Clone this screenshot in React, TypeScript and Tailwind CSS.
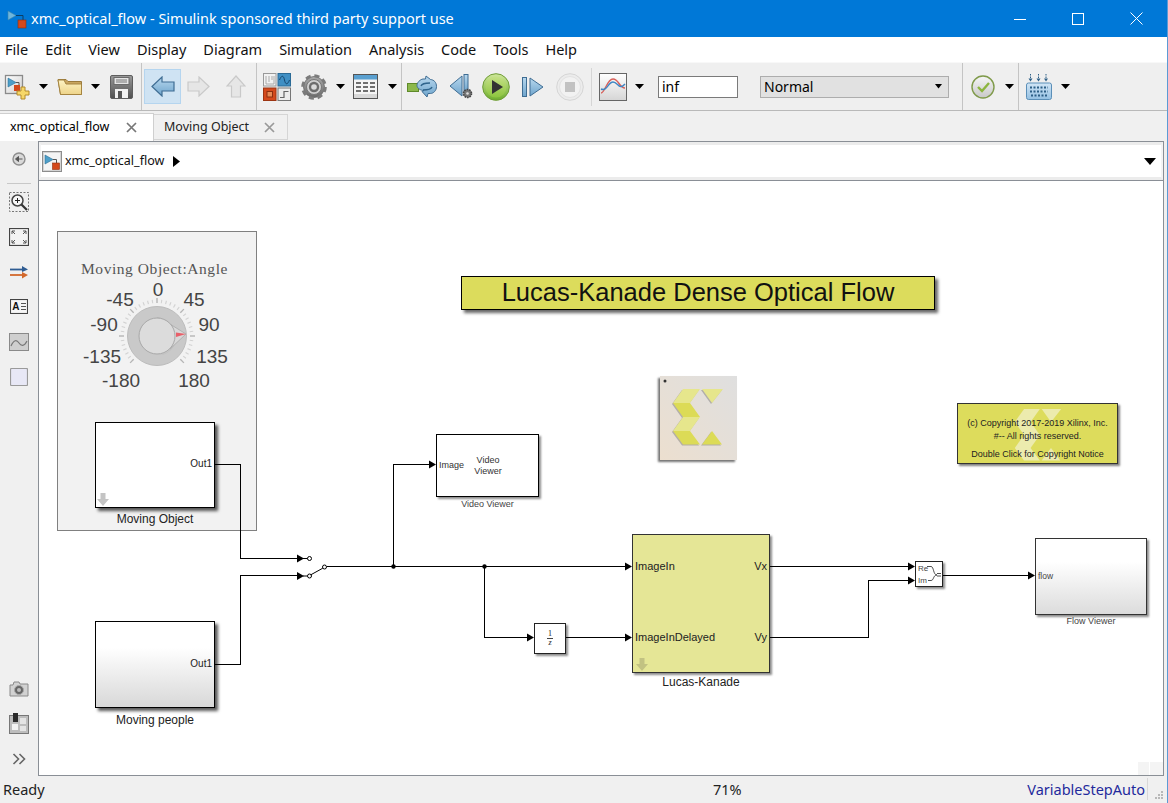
import React from "react";

const Caret = ({ ml, small }: { ml: string; small?: boolean }) => (
  <svg width="9" height="5" viewBox="0 0 9 5" className={`${ml} shrink-0`}>
    <polygon points={small ? "1,0 8,0 4.5,4.5" : "0,0 9,0 4.5,5"} fill="#000" />
  </svg>
);

const Grad = ({ id, a, b, diag }: { id: string; a: string; b: string; diag?: boolean }) => (
  <linearGradient id={id} x1="0" y1="0" x2={diag ? "1" : "0"} y2="1">
    <stop offset="0" stopColor={a} />
    <stop offset="1" stopColor={b} />
  </linearGradient>
);

const ModelGlyph = ({ w = 20, h = 21 }: { w?: number; h?: number }) => (
  <svg width={w} height={h} viewBox="0 0 20 21" className="shrink-0">
    <rect x="0.5" y="0.5" width="19" height="20" fill="#f4f4f4" stroke="#8d8d8d" />
    <rect x="1.5" y="1.5" width="17" height="18" fill="none" stroke="#d4d4d4" />
    <polygon points="3,4 3,13 11,8.5" fill="#4d9fc9" stroke="#2c6f96" strokeWidth="0.6" />
    <path d="M11 8.5H14.5V12" fill="none" stroke="#555" />
    <rect x="10.5" y="12" width="7" height="6.5" fill="#d4491c" stroke="#933010" strokeWidth="0.6" />
  </svg>
);

const Icons = {
  NewModel: () => (
    <svg width="26" height="26" viewBox="0 0 26 26" className="shrink-0">
      <rect x="1.5" y="1.5" width="17" height="18" fill="url(#gBox)" stroke="#8a8a8a" strokeWidth="1.3" />
      <polygon points="4,4 4,13 12,8.5" fill="#4d9fc9" stroke="#2c6f96" strokeWidth="0.6" />
      <path d="M12 8.5H15V12" fill="none" stroke="#555" />
      <rect x="10" y="11" width="6" height="6" fill="#d4491c" />
      <path d="M18 13h4v4h4v4h-4v4h-4v-4h-4v-4h4z" transform="translate(-1,0)" fill="#f6d768" stroke="#b48a2a" />
    </svg>
  ),
  Folder: () => (
    <svg width="26" height="18" viewBox="0 0 26 18" className="shrink-0">
      <path d="M1 1.5H9L11 3.5H24.5V16.5H3.5Z" fill="#c9a660" stroke="#9a7a3c" />
      <path d="M1 2L3.5 16.5H24.5V6H9L7 2Z" fill="url(#gFold)" stroke="#a58440" />
    </svg>
  ),
  Save: () => (
    <svg width="23" height="24" viewBox="0 0 23 24" className="shrink-0">
      <rect x="0.5" y="0.5" width="22" height="23" rx="1.5" fill="url(#gSave)" stroke="#5e5e5e" />
      <rect x="4" y="2.5" width="15" height="7" fill="#e4e4e4" stroke="#6a6a6a" />
      <path d="M6 5H17M6 7H17" stroke="#777" />
      <rect x="5" y="14" width="13" height="9" fill="#f1f1f1" />
      <rect x="8" y="16" width="4" height="7" fill="#555" />
    </svg>
  ),
  Back: () => (
    <svg width="24" height="21" viewBox="0 0 24 21" className="shrink-0">
      <polygon points="1,10.5 11,1 11,6 23,6 23,15 11,15 11,20" fill="url(#gArrow)" stroke="#3f6d93" strokeWidth="1.2" />
    </svg>
  ),
  Forward: () => (
    <svg width="23" height="21" viewBox="0 0 23 21" className="shrink-0">
      <polygon points="22,10.5 12,1 12,6 1,6 1,15 12,15 12,20" fill="#e6e6e6" stroke="#c9c9c9" strokeWidth="1.2" />
    </svg>
  ),
  Up: () => (
    <svg width="20" height="23" viewBox="0 0 20 23" className="shrink-0">
      <polygon points="10,1 19,11 14.5,11 14.5,22 5.5,22 5.5,11 1,11" fill="#e6e6e6" stroke="#c9c9c9" strokeWidth="1.2" />
    </svg>
  ),
  Library: () => (
    <svg width="28" height="28" viewBox="0 0 28 28" className="shrink-0">
      <rect x="0.5" y="0.5" width="12.5" height="12.5" fill="#f2f2f2" stroke="#999" />
      <path d="M3 3V11M6 3V9M9 3V7M3 11H11L11 3" fill="none" stroke="#aaa" />
      <rect x="15" y="0.5" width="12.5" height="12.5" fill="#3f8fc4" stroke="#2a6a96" />
      <path d="M16.5 7c2-5 4-5 5 0s3 5 5 0" fill="none" stroke="#16466e" />
      <rect x="0.5" y="15" width="12.5" height="12.5" fill="#d4491c" stroke="#9c3513" />
      <rect x="4" y="18.5" width="5.5" height="5.5" fill="#e88a55" stroke="#8c2f10" />
      <rect x="15" y="15" width="12.5" height="12.5" fill="#ededed" stroke="#777" />
      <path d="M17 24.5H21V18.5H25.5" fill="none" stroke="#666" strokeWidth="1.2" />
    </svg>
  ),
  Gear: () => (
    <svg width="26" height="26" viewBox="0 0 26 26" className="shrink-0">
      <circle cx="13" cy="13" r="10.5" fill="url(#gGear)" stroke="#666" strokeWidth="0.8" />
      <circle cx="13" cy="13" r="11.3" fill="none" stroke="#7b7b7b" strokeWidth="3" strokeDasharray="5.1 3.78" />
      <circle cx="13" cy="13" r="7.5" fill="#cfcfcf" stroke="#777" />
      <circle cx="13" cy="13" r="5.2" fill="#6d6d6d" />
      <circle cx="13" cy="13" r="2.8" fill="#dadada" />
    </svg>
  ),
  Config: () => (
    <svg width="25" height="25" viewBox="0 0 25 25" className="shrink-0">
      <rect x="0.5" y="0.5" width="24" height="24" fill="#f5f5f5" stroke="#555" />
      <rect x="1" y="1" width="23" height="4.5" fill="#5aa0d0" />
      <path d="M3 9H8M10 9H15M17 9H22M3 13H8M10 13H15M17 13H22M3 17H8M10 17H15M17 17H22" stroke="#444" strokeWidth="1.4" />
      <rect x="1" y="20" width="23" height="4" fill="#d8d8d8" />
    </svg>
  ),
  Update: () => (
    <svg width="30" height="23" viewBox="0 0 30 23" className="shrink-0">
      <rect x="0.5" y="8.5" width="11" height="8" fill="#8cb84c" stroke="#5f8a2a" />
      <path d="M19 1l4.5 3.5c3.5.3 6 3 6 7s-3 7-6 7H21l-1 3.5-5-5.5 2-1c-3 0-7-2-7-5s3-6 6-6.5h2.5z" fill="url(#gArrow)" stroke="#3f6d93" />
      <path d="M14 11c1-3 5-3 9-3M25 12c-1 3-5 3-9 3" fill="none" stroke="#2f648c" strokeWidth="1.4" />
    </svg>
  ),
  StepBack: () => (
    <svg width="24" height="25" viewBox="0 0 24 25" className="shrink-0">
      <polygon points="1,12 13,2 13,22" fill="url(#gArrow)" stroke="#3f6d93" />
      <rect x="15" y="0.5" width="4" height="17" fill="url(#gArrow)" stroke="#3f6d93" />
      <circle cx="18.5" cy="19.5" r="4" fill="#777" stroke="#444" strokeDasharray="1.6 0.9" strokeWidth="1.6" />
      <circle cx="18.5" cy="19.5" r="1.3" fill="#ddd" />
    </svg>
  ),
  Play: () => (
    <svg width="28" height="28" viewBox="0 0 28 28" className="shrink-0">
      <circle cx="14" cy="14" r="13.3" fill="url(#gPlay)" stroke="#6f9c36" />
      <circle cx="14" cy="14" r="10.5" fill="url(#gPlay2)" />
      <polygon points="10,7 21,14 10,21" fill="#333" />
    </svg>
  ),
  StepFwd: () => (
    <svg width="22" height="20" viewBox="0 0 22 20" className="shrink-0">
      <rect x="0.5" y="0.5" width="4" height="19" fill="url(#gArrow)" stroke="#3f6d93" />
      <polygon points="8,1 21,10 8,19" fill="url(#gArrow)" stroke="#3f6d93" />
    </svg>
  ),
  Stop: () => (
    <svg width="28" height="28" viewBox="0 0 28 28" className="shrink-0">
      <circle cx="14" cy="14" r="13.3" fill="#ececec" stroke="#d5d5d5" />
      <circle cx="14" cy="14" r="10.5" fill="#f2f2f2" stroke="#e2e2e2" />
      <rect x="9" y="9" width="10" height="10" fill="#c2c2c2" />
    </svg>
  ),
  Scope: () => (
    <svg width="28" height="28" viewBox="0 0 28 28" className="shrink-0">
      <rect x="0.5" y="0.5" width="27" height="27" fill="url(#gScope)" stroke="#666" />
      <path d="M2 20C6 20 8 6 14 6S20 15 26 15" fill="none" stroke="#d8605a" strokeWidth="1.4" />
      <path d="M2 16C8 19 9 9 14 9S20 18 26 11" fill="none" stroke="#3f86c4" strokeWidth="1.4" />
    </svg>
  ),
  Check: () => (
    <svg width="24" height="24" viewBox="0 0 24 24" className="shrink-0">
      <circle cx="12" cy="12" r="11" fill="url(#gChk)" stroke="#7f9a4a" strokeWidth="1.4" />
      <path d="M7 12l4 4 7-8" fill="none" stroke="#8cb53e" strokeWidth="2.4" />
    </svg>
  ),
  Keyboard: () => (
    <svg width="26" height="26" viewBox="0 0 26 26" className="shrink-0">
      <path d="M4.5 0v5M12.5 0v5M20 0v5" stroke="#2c5e85" strokeDasharray="1.5 1" />
      <path d="M2.5 4.5h4l-2 3zM10.5 4.5h4l-2 3zM18 4.5h4l-2 3z" fill="#2c5e85" />
      <rect x="0.5" y="9" width="25" height="16.5" rx="2" fill="url(#gKey)" stroke="#5b8fb8" />
      <path d="M4 13.5h18M4 17.5h18M5 21.5h16" stroke="#2d5f86" strokeWidth="2" strokeDasharray="2 1.5" />
    </svg>
  ),
  BackCircle: () => (
    <svg width="14" height="14" viewBox="0 0 14 14" className="shrink-0">
      <circle cx="7" cy="7" r="6" fill="#d9d9d9" stroke="#8e8e8e" strokeWidth="1.4" />
      <path d="M10.5 7H6M6.5 4.5L3.5 7l3 2.5z" fill="#555" stroke="#555" />
    </svg>
  ),
  ZoomIn: () => (
    <svg width="20" height="20" viewBox="0 0 20 20" className="shrink-0">
      <rect x="0.5" y="0.5" width="19" height="19" fill="#efefef" stroke="#777" strokeDasharray="2 1.5" />
      <circle cx="8.5" cy="8.5" r="5.5" fill="#f8f8f8" stroke="#444" strokeWidth="1.5" />
      <path d="M6 8.5h5M8.5 6v5" stroke="#222" />
      <path d="M12.5 12.5L18 18" stroke="#333" strokeWidth="2.2" />
    </svg>
  ),
  Fit: () => (
    <svg width="20" height="18" viewBox="0 0 20 18" className="shrink-0">
      <rect x="0.5" y="0.5" width="19" height="17" fill="#f4f4f4" stroke="#444" strokeWidth="1.2" />
      <path d="M3 6V3h3M3 3l3 3M17 6V3h-3M17 3l-3 3M3 12v3h3M3 15l3-3M17 12v3h-3M17 15l-3-3" fill="none" stroke="#555" />
    </svg>
  ),
  Arrows: () => (
    <svg width="20" height="14" viewBox="0 0 20 14" className="shrink-0">
      <path d="M1 4.5H14" stroke="#2f5c92" strokeWidth="1.8" />
      <polygon points="13,1 19,4.5 13,7" fill="#2f5c92" />
      <path d="M1 10H14" stroke="#d2682c" strokeWidth="1.8" />
      <polygon points="13,7 19,10 13,13.5" fill="#d2682c" />
    </svg>
  ),
  Annot: () => (
    <svg width="18" height="15" viewBox="0 0 18 15" className="shrink-0">
      <rect x="0.5" y="0.5" width="17" height="14" fill="#f6f6f6" stroke="#444" strokeWidth="1.1" />
      <text x="2.2" y="11" fontSize="10" fontWeight="700" fontFamily="Liberation Sans" fill="#111">A</text>
      <path d="M11 4.5h5M11 7.5h5M11 10.5h5" stroke="#555" />
    </svg>
  ),
  Img: () => (
    <svg width="20" height="18" viewBox="0 0 20 18" className="shrink-0">
      <rect x="0.5" y="0.5" width="19" height="17" fill="#cfcfcf" stroke="#8a8a8a" />
      <path d="M2 13C5 6 8 7 10 10s5 4 8-2" fill="none" stroke="#777" strokeWidth="1.2" />
    </svg>
  ),
  Area: () => (
    <svg width="18" height="18" viewBox="0 0 18 18" className="shrink-0">
      <rect x="0.5" y="0.5" width="17" height="17" rx="1" fill="#e8e8f6" stroke="#9a9a9a" strokeWidth="1.2" />
    </svg>
  ),
  Camera: () => (
    <svg width="20" height="16" viewBox="0 0 20 16" className="shrink-0">
      <path d="M1 4h3l1-3h5l1 2h8v12H1z" fill="#d2d2d2" stroke="#8a8a8a" />
      <circle cx="10" cy="9" r="4.5" fill="#666" stroke="#aaa" />
      <circle cx="10" cy="9" r="2" fill="#bbb" />
    </svg>
  ),
  Persp: () => (
    <svg width="20" height="21" viewBox="0 0 20 21" className="shrink-0">
      <rect x="0.5" y="2.5" width="19" height="18" fill="#bdbdbd" stroke="#777" />
      <rect x="4" y="0" width="5" height="9" fill="#2b2b2b" />
      <rect x="3" y="11" width="6" height="6" fill="#f2f2f2" />
      <rect x="11" y="5" width="6" height="6" fill="#e4e4e4" />
      <rect x="11" y="13" width="6" height="5" fill="#e4e4e4" />
    </svg>
  ),
  Chevrons: () => (
    <svg width="14" height="12" viewBox="0 0 14 12" className="shrink-0">
      <path d="M1.5 1l5 5-5 5M7.5 1l5 5-5 5" fill="none" stroke="#666" strokeWidth="1.6" />
    </svg>
  ),
};

const XLogo = ({ a, b }: { a: string; b: string }) => (
  <>
    <polygon points="700,388 683,388 673,402 690,402" fill={a} />
    <polygon points="673,402 690,402 700,416 683,416" fill={b} />
    <polygon points="683,416 700,416 690,430 673,430" fill={a} />
    <polygon points="673,430 690,430 700,443.5 683,443.5" fill={b} />
    <polygon points="702,388 723,388 712,402" fill={a} />
    <polygon points="702,443.5 722,443.5 712,430" fill={b} />
  </>
);

const Arrow = ({ x, y }: { x: number; y: number }) => (
  <polygon points={`${x - 7},${y - 3.5} ${x},${y + 0.5} ${x - 7},${y + 4.5}`} fill="#000" />
);

const ticks = Array.from({ length: 37 }, (_, i) => {
  const a = ((-135 + i * 7.5) * Math.PI) / 180;
  const major = i % 6 === 0;
  return {
    x1: 157 + Math.sin(a) * 33,
    y1: 335 - Math.cos(a) * 33,
    x2: 157 + Math.sin(a) * (major ? 38 : 36.5),
    y2: 335 - Math.cos(a) * (major ? 38 : 36.5),
    major,
  };
});

const dialLabels: [string, number, number][] = [
  ["0", 158, 295],
  ["-45", 120, 305],
  ["45", 194, 305],
  ["-90", 104, 330],
  ["90", 209, 330],
  ["-135", 102, 362],
  ["135", 212, 362],
  ["-180", 121, 386],
  ["180", 194, 386],
];

const Defs = () => (
  <svg width="0" height="0" className="absolute">
    <defs>
      <Grad id="gBox" a="#ffffff" b="#cfcfcf" diag />
      <Grad id="gFold" a="#fdf3c4" b="#eed48a" />
      <Grad id="gSave" a="#9a9a9a" b="#4f4f4f" />
      <Grad id="gArrow" a="#b8d8ee" b="#6ea4cc" />
      <Grad id="gGear" a="#a9a9a9" b="#6a6a6a" />
      <Grad id="gPlay" a="#cfe79a" b="#6fae2e" />
      <Grad id="gPlay2" a="#c5e086" b="#8cc43e" />
      <Grad id="gScope" a="#ffffff" b="#d5d5d5" />
      <Grad id="gChk" a="#f6f6f6" b="#c8c8c8" />
      <Grad id="gKey" a="#d2e6f6" b="#94c0e2" />
    </defs>
  </svg>
);

export default function App() {
  return (
    <div className="w-[1168px] h-[803px] flex flex-col overflow-hidden bg-[#f0f0f0] text-black font-['Noto_Sans',sans-serif] border-r border-[#5b9bd5]">
      <Defs />
      {/* Title bar */}
      <div className="h-[37px] shrink-0 bg-[#0078d7] flex items-center text-white">
        <svg width="20" height="20" viewBox="0 0 20 20" className="ml-[7px] shrink-0">
          <polygon points="1,2 1,11 9,6.5" fill="#6fb6dc" stroke="#3d86ad" strokeWidth="0.6" />
          <path d="M9 6.5H16V11" fill="none" stroke="#0b3f66" />
          <rect x="11" y="11" width="8" height="8" fill="#d4491c" stroke="#8e2d0d" strokeWidth="0.6" />
        </svg>
        <span className="ml-[4px] text-[14.5px] leading-none whitespace-nowrap">xmc_optical_flow - Simulink sponsored third party support use</span>
        <div className="ml-auto flex items-center pr-[1px]">
          <div className="w-[58.5px] flex justify-center">
            <svg width="12" height="12" viewBox="0 0 12 12"><path d="M0 6.5H12" stroke="#fff" /></svg>
          </div>
          <div className="w-[58.5px] flex justify-center">
            <svg width="12" height="12" viewBox="0 0 12 12"><rect x="0.5" y="0.5" width="11" height="11" fill="none" stroke="#fff" /></svg>
          </div>
          <div className="w-[58.5px] flex justify-center">
            <svg width="13" height="13" viewBox="0 0 13 13"><path d="M0.5 0.5L12.5 12.5M12.5 0.5L0.5 12.5" stroke="#fff" /></svg>
          </div>
        </div>
      </div>
      {/* Menu */}
      <div className="h-[25px] shrink-0 bg-white flex items-center gap-[17px] pl-[5px] text-[14.5px] leading-none text-[#111]">
        {["File", "Edit", "View", "Display", "Diagram", "Simulation", "Analysis", "Code", "Tools", "Help"].map((m) => (
          <span key={m}>{m}</span>
        ))}
      </div>
      {/* Toolbar */}
      <div className="h-[49px] shrink-0 flex border-t border-t-[#f8f8f8] border-b border-b-[#b9b9b9] bg-[#efefef]">
        <div className="w-[141px] flex items-center border-r-0">
          <div className="ml-[4px]"><Icons.NewModel /></div>
          <Caret ml="ml-[9px]" />
          <div className="ml-[9px]"><Icons.Folder /></div>
          <Caret ml="ml-[8px]" />
          <div className="ml-[10px]"><Icons.Save /></div>
        </div>
        <div className="w-[115px] flex items-center border-l border-[#c4c4c4]">
          <div className="ml-[2px] w-[37px] h-[35px] bg-[#cfe3f3] border border-[#b5d5ef] flex items-center justify-center"><Icons.Back /></div>
          <div className="ml-[6px]"><Icons.Forward /></div>
          <div className="ml-[16px]"><Icons.Up /></div>
        </div>
        <div className="w-[145px] flex items-center border-l border-[#c4c4c4]">
          <div className="ml-[6px]"><Icons.Library /></div>
          <div className="ml-[10px]"><Icons.Gear /></div>
          <Caret ml="ml-[9px]" />
          <div className="ml-[8px]"><Icons.Config /></div>
          <Caret ml="ml-[10px]" />
        </div>
        <div className="w-[191px] flex items-center border-l border-[#c4c4c4]">
          <div className="ml-[5px]"><Icons.Update /></div>
          <div className="ml-[12px]"><Icons.StepBack /></div>
          <div className="ml-[9px]"><Icons.Play /></div>
          <div className="ml-[12px]"><Icons.StepFwd /></div>
          <div className="ml-[12px]"><Icons.Stop /></div>
          <div className="ml-auto w-px h-[38px] bg-[#d5d5d5]" />
        </div>
        <div className="w-[370px] flex items-center">
          <div className="ml-[7px]"><Icons.Scope /></div>
          <Caret ml="ml-[8px]" />
          <div className="ml-[14px] w-[80px] h-[22px] bg-white border border-[#7a7a7a] flex items-center pl-[3px] text-[14px] leading-none">inf</div>
          <div className="ml-[22px] w-[189px] h-[22px] bg-[#e1e1e1] border border-[#adadad] flex items-center pl-[3px] text-[14px] leading-none">
            Normal
            <Caret ml="ml-auto mr-[5px]" small />
          </div>
        </div>
        <div className="w-[56px] flex items-center border-l border-[#c4c4c4]">
          <div className="ml-[8px]"><Icons.Check /></div>
          <Caret ml="ml-[10px]" />
        </div>
        <div className="flex-1 flex items-center border-l border-[#c4c4c4]">
          <div className="ml-[7px]"><Icons.Keyboard /></div>
          <Caret ml="ml-[9px]" />
        </div>
      </div>
      {/* Tabs */}
      <div className="h-[30px] shrink-0 flex items-end">
        <div className="w-[154px] h-[28px] bg-white border-t border-r border-[#cfcfcf] flex items-center pl-[10px] text-[12.5px] leading-none">
          <span>xmc_optical_flow</span>
          <svg width="11" height="11" viewBox="0 0 11 11" className="ml-auto mr-[16px]"><path d="M1 1l9 9M10 1l-9 9" stroke="#777" strokeWidth="1.7" /></svg>
        </div>
        <div className="w-[134px] h-[26px] mb-[1px] border border-l-0 border-[#d5d5d5] flex items-center pl-[10px] text-[12.5px] leading-none text-[#222]">
          <span>Moving Object</span>
          <svg width="11" height="11" viewBox="0 0 11 11" className="ml-auto mr-[12px]"><path d="M1 1l9 9M10 1l-9 9" stroke="#999" strokeWidth="1.7" /></svg>
        </div>
      </div>
      {/* Main */}
      <div className="flex-1 min-h-0 flex">
        <div className="w-[38px] shrink-0 flex flex-col items-center">
          <div className="h-[36px] flex items-center justify-center"><Icons.BackCircle /></div>
          <div className="w-[24px] h-px bg-[#c8c8c8] mt-[6px]" />
          {[Icons.ZoomIn, Icons.Fit, Icons.Arrows, Icons.Annot, Icons.Img, Icons.Area].map((I, i) => (
            <div key={i} className="h-[35px] w-full flex items-center justify-center first:mt-[6px]"><I /></div>
          ))}
          <div className="flex-1" />
          {[Icons.Camera, Icons.Persp, Icons.Chevrons].map((I, i) => (
            <div key={i} className="h-[35px] w-full flex items-center justify-center"><I /></div>
          ))}
        </div>
        <div className="w-[1126px] shrink-0 flex flex-col border border-[#8a8f96] bg-white">
          {/* Breadcrumb */}
          <div className="h-[38px] shrink-0 bg-white border-y-[3px] border-t-[#ececec] border-b-[#ececec] border-x-[2px] border-x-[#f4f4f4] flex items-center">
            <div className="ml-[1px]"><ModelGlyph /></div>
            <span className="ml-[3px] text-[12.5px] leading-none text-[#111]">xmc_optical_flow</span>
            <svg width="7" height="11" viewBox="0 0 7 11" className="ml-[9px]"><polygon points="0,0 7,5.5 0,11" fill="#000" /></svg>
            <svg width="12" height="7" viewBox="0 0 12 7" className="ml-auto mr-[5px]"><polygon points="0,0 12,0 6,7" fill="#000" /></svg>
          </div>
          {/* Canvas */}
          <div className="relative flex-1 border-t border-[#8a8f96] overflow-hidden font-['Liberation_Sans',sans-serif]">
            {/* Gauge panel */}
            <div className="absolute left-[18px] top-[50px] w-[200px] h-[300px] bg-[#f2f2f2] border border-[#808080]" />

            {/* Faint scrollbar remnants */}
            <div className="absolute left-[1099px] top-[581px] w-[11px] h-[14px] bg-[#f4f4f4]" />
            <div className="absolute left-[1111px] top-[581px] w-[14px] h-[14px] bg-[#f4f4f4]" />

            {/* Wires + dial, drawn in page coordinates */}
            <svg width="1124" height="595" viewBox="39 180 1124 595" className="absolute left-0 top-0">
              <text x="154.5" y="272.5" textAnchor="middle" fontSize="15.5" fontFamily="Liberation Serif" letterSpacing="0.55" fill="#555">Moving Object:Angle</text>
              {dialLabels.map(([t, x, y]) => (
                <text key={t} x={x} y={y} textAnchor="middle" fontSize="19" fontFamily="Liberation Sans" fill="#444">{t}</text>
              ))}
              {ticks.map((t, i) => (
                <line key={i} x1={t.x1} y1={t.y1} x2={t.x2} y2={t.y2} stroke={t.major ? "#b5b5b5" : "#d2d2d2"} strokeWidth={t.major ? 1.4 : 1.1} />
              ))}
              <circle cx="157" cy="335" r="29.5" fill="#c9c9c9" stroke="#bcbcbc" />
              <path d="M157 354 A18 18 0 0 0 174 327 L186 333 L172 346 A18 18 0 0 1 157 354Z" fill="#c1c1c1" />
              <path d="M157 317 A18 18 0 0 1 161 317.5 L186 333 L170 348 Z" fill="#d8d8d8" stroke="#aaa" strokeWidth="0.8" />
              <circle cx="157" cy="335" r="18" fill="#dcdcdc" stroke="#a8a8a8" />
              <polygon points="176,331.5 186,333 176,336" fill="#e8606a" />

              <g fill="none" stroke="#000" strokeWidth="1" shapeRendering="crispEdges">
                <path d="M215 463.5H240.5V557.5H297" />
                <path d="M215 663.5H240.5V574.5H297" />
                <path d="M327 565.5H625" />
                <path d="M393.5 565.5V463.5H430" />
                <path d="M484.5 565.5V636.5H528" />
                <path d="M565 636.5H625" />
                <path d="M770 565.5H909" />
                <path d="M770 636.5H868.5V579.5H909" />
                <path d="M943 574.5H1029" />
              </g>
              <g fill="none" stroke="#000" strokeWidth="1">
                <path d="M303 557.5H307.5M303 575H307.5M310.8 573.8L322.8 567.2" />
                <circle cx="309.5" cy="557.5" r="2" />
                <circle cx="309.5" cy="575" r="2" />
                <circle cx="324.5" cy="566" r="2" />
              </g>
              <Arrow x={304} y={557} />
              <Arrow x={304} y={574.5} />
              <Arrow x={436} y={463} />
              <Arrow x={534} y={636} />
              <Arrow x={632} y={565} />
              <Arrow x={632} y={636} />
              <Arrow x={915} y={565} />
              <Arrow x={915} y={579} />
              <Arrow x={1035} y={574} />
              <circle cx="393.5" cy="565.5" r="2.2" fill="#000" />
              <circle cx="484.5" cy="565.5" r="2.2" fill="#000" />
            </svg>

            {/* Moving Object */}
            <div className="absolute left-[56px] top-[241px] w-[120px] h-[86px] bg-white border border-black shadow-[3px_3px_3px_rgba(0,0,0,0.65)]">
              <span className="absolute right-[2px] top-[35px] text-[10px] leading-[12px] text-[#222]">Out1</span>
              <svg width="12" height="13" viewBox="0 0 12 13" className="absolute left-[1px] bottom-[1px]"><polygon points="3.5,0 8.5,0 8.5,6 12,6 6,13 0,6 3.5,6" fill="#c4c4c4" /></svg>
            </div>
            <div className="absolute left-[56px] top-[331px] w-[120px] text-center text-[12px] leading-[14px] text-[#222]">Moving Object</div>

            {/* Moving people */}
            <div className="absolute left-[56px] top-[440px] w-[120px] h-[87px] bg-gradient-to-b from-white from-30% to-[#d8d8d8] border border-black shadow-[3px_3px_3px_rgba(0,0,0,0.65)]">
              <span className="absolute right-[2px] top-[36px] text-[10px] leading-[12px] text-[#222]">Out1</span>
            </div>
            <div className="absolute left-[56px] top-[532px] w-[120px] text-center text-[12px] leading-[14px] text-[#222]">Moving people</div>

            {/* Title */}
            <div className="absolute left-[422px] top-[95px] w-[474px] h-[34px] bg-[#dcdc5c] border border-black shadow-[3px_3px_3px_rgba(0,0,0,0.6)] flex items-center justify-center text-[25.5px] leading-none text-[#111]">
              Lucas-Kanade Dense Optical Flow
            </div>

            {/* Xilinx logo block */}
            <div className="absolute left-[621px] top-[195px] w-[77px] h-[84px] bg-gradient-to-tr from-[#ecdfcf] to-[#dfdfdf] shadow-[-2px_2px_2px_rgba(0,0,0,0.55)]" />
            <svg width="90" height="90" viewBox="655 372 90 90" className="absolute left-[616px] top-[192px]">
              <circle cx="665" cy="380" r="1.5" fill="#333" />
              <g transform="translate(-1,1)" opacity="0.35"><XLogo a="#555" b="#555" /></g>
              <XLogo a="#e6e68c" b="#dcdb56" />
            </svg>

            {/* Copyright */}
            <div className="absolute left-[918px] top-[222px] w-[161px] h-[61px] bg-[#dddc5c] border border-[#333] shadow-[2px_2px_2px_rgba(0,0,0,0.5)] text-center text-[#222] text-[9px] leading-[11px] overflow-hidden">
              <svg width="52" height="52" viewBox="672 388 52 56" className="absolute left-[54px] top-[5px]">
                <XLogo a="#ecebae" b="#ecebae" />
              </svg>
              <div className="relative mt-[14px]">(c) Copyright 2017-2019 Xilinx, Inc.</div>
              <div className="relative mt-[2px]">#-- All rights reserved.</div>
              <div className="relative mt-[7px]">Double Click for Copyright Notice</div>
            </div>

            {/* Video Viewer */}
            <div className="absolute left-[397px] top-[253px] w-[103px] h-[63px] bg-white border border-black shadow-[2px_2px_2px_rgba(0,0,0,0.45)] text-[9px] leading-[11px] text-[#333]">
              <span className="absolute left-[2px] top-[25px]">Image</span>
              <div className="absolute left-[31px] top-[20px] w-[40px] text-center">Video<br />Viewer</div>
            </div>
            <div className="absolute left-[397px] top-[318px] w-[103px] text-center text-[9px] leading-[11px] text-[#444]">Video Viewer</div>

            {/* Unit delay */}
            <div className="absolute left-[495px] top-[442px] w-[32px] h-[31px] bg-white border border-[#222] shadow-[2px_2px_2px_rgba(0,0,0,0.45)] flex flex-col items-center justify-center font-['Liberation_Serif',serif] text-[8px] leading-[8px] text-[#222]">
              <span>1</span>
              <span className="w-[6px] h-px bg-[#444]" />
              <span className="italic">z</span>
            </div>

            {/* Lucas-Kanade */}
            <div className="absolute left-[593px] top-[353px] w-[138px] h-[139px] bg-[#e5e696] border border-[#333] shadow-[2px_2px_2px_rgba(0,0,0,0.45)] text-[11px] leading-[13px] text-[#222]">
              <span className="absolute left-[2px] top-[25px]">ImageIn</span>
              <span className="absolute left-[2px] top-[96px]">ImageInDelayed</span>
              <span className="absolute right-[2px] top-[25px]">Vx</span>
              <span className="absolute right-[2px] top-[96px]">Vy</span>
              <svg width="12" height="13" viewBox="0 0 12 13" className="absolute left-[3px] bottom-[1px]"><polygon points="3.5,0 8.5,0 8.5,6 12,6 6,13 0,6 3.5,6" fill="#c2c282" /></svg>
            </div>
            <div className="absolute left-[593px] top-[494px] w-[138px] text-center text-[12px] leading-[14px] text-[#222]">Lucas-Kanade</div>

            {/* Real-Imag */}
            <div className="absolute left-[876px] top-[380px] w-[28px] h-[26px] bg-white border border-[#222] shadow-[2px_2px_2px_rgba(0,0,0,0.45)] text-[8px] leading-[9px] text-[#444]">
              <span className="absolute left-[2px] top-[1.5px]">Re</span>
              <span className="absolute left-[2px] top-[14px]">Im</span>
              <svg width="28" height="26" viewBox="0 0 28 26" className="absolute left-[-1px] top-[-1px]">
                <path d="M12 5.5H16C19 5.5 18 14 22 14C18 14 19 19.5 16 19.5H13M22 12.5H26M22 15H26" fill="none" stroke="#222" strokeWidth="0.8" />
              </svg>
            </div>

            {/* Flow Viewer */}
            <div className="absolute left-[996px] top-[357px] w-[112px] h-[77px] bg-gradient-to-b from-white from-30% to-[#dcdcdc] border border-[#333] shadow-[2px_2px_2px_rgba(0,0,0,0.45)] text-[8.5px] leading-[10px] text-[#444]">
              <span className="absolute left-[2px] top-[32px]">flow</span>
            </div>
            <div className="absolute left-[996px] top-[435px] w-[112px] text-center text-[9px] leading-[11px] text-[#444]">Flow Viewer</div>
          </div>
        </div>
      </div>
      {/* Status bar */}
      <div className="h-[27px] shrink-0 flex items-center text-[14.5px] leading-none relative">
        <span className="ml-[3px] text-[#222]">Ready</span>
        <span className="absolute left-[713px] text-[#222]">71%</span>
        <span className="absolute right-[22px] text-[#1f2a9c]">VariableStepAuto</span>
        <div className="absolute left-[1147px] top-[2px] h-[22px] w-px bg-[#d8d8d8]" />
        <svg width="10" height="10" viewBox="0 0 10 10" className="absolute right-[3px] bottom-[3px]">
          <path d="M7 1h2v2H7zM4 4h2v2H4zM7 4h2v2H7zM1 7h2v2H1zM4 7h2v2H4zM7 7h2v2H7z" fill="#b8b8b8" />
        </svg>
      </div>
    </div>
  );
}
